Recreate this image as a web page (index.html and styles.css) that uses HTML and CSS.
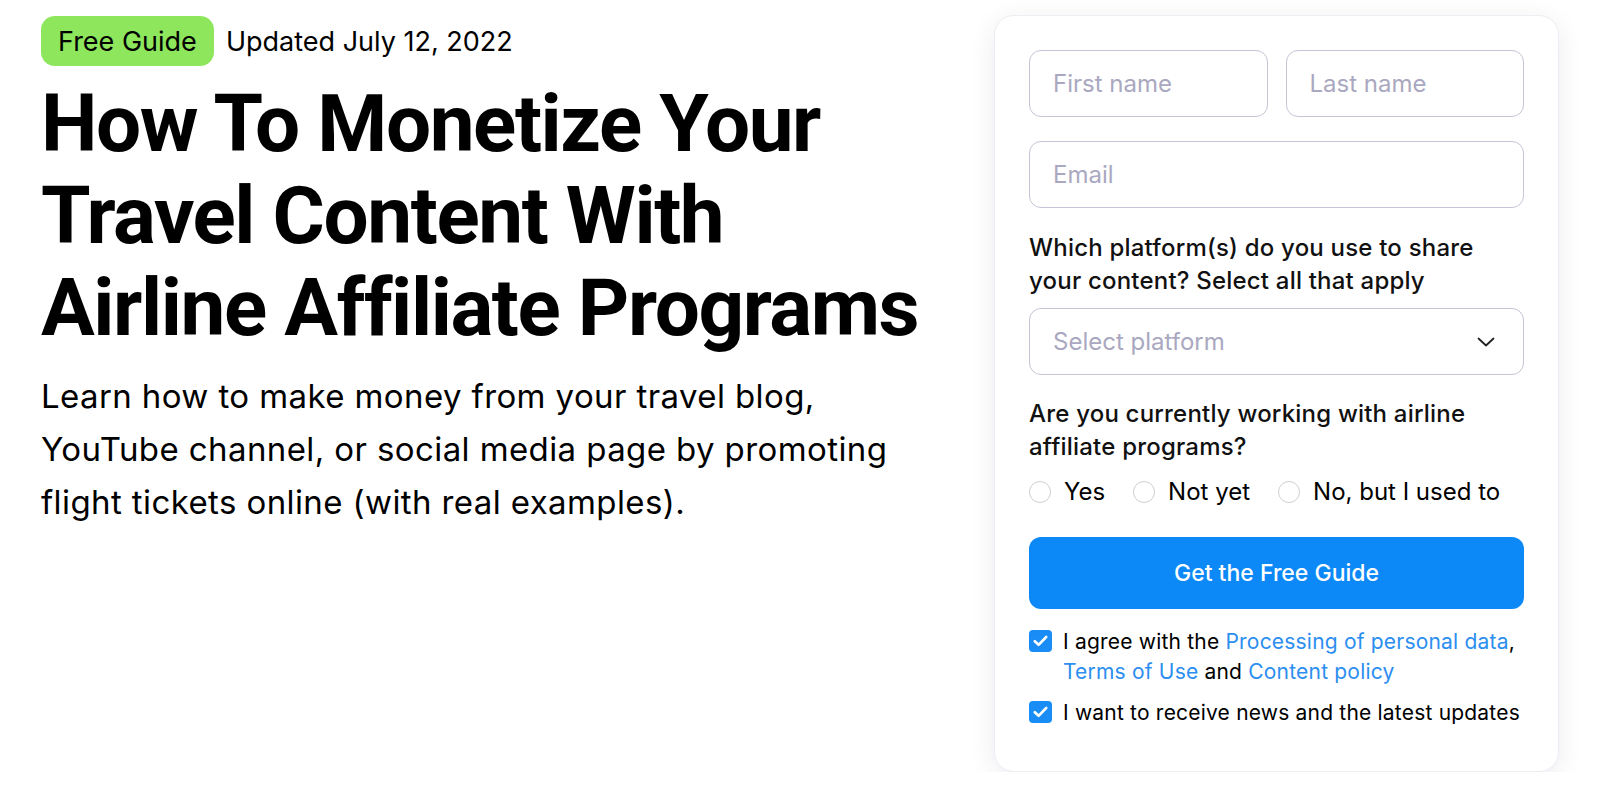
FILE: index.html
```html
<!DOCTYPE html>
<html lang="en">
<head>
    <meta charset="UTF-8">
    <meta name="viewport" content="width=device-width, initial-scale=1.0">
    <title>Airline Affiliate Programs Guide</title>
    <link rel="stylesheet" href="styles.css">
</head>
<body>
    <div class="page">
        <section class="intro">
            <div class="meta">
                <span class="badge">Free Guide</span>
                <span class="updated">Updated July 12, 2022</span>
            </div>
            <h1>How To Monetize Your<br>Travel Content With<br>Airline Affiliate Programs</h1>
            <p class="lead">Learn how to make money from your travel blog,<br>YouTube channel, or social media page by promoting<br>flight tickets online (with real examples).</p>
        </section>

        <form class="card" onsubmit="return false">
            <div class="name-row">
                <input type="text" name="first_name" placeholder="First name">
                <input type="text" name="last_name" placeholder="Last name">
            </div>
            <input type="email" name="email" class="email" placeholder="Email">

            <p class="question">Which platform(s) do you use to share your content? Select all that apply</p>
            <div class="select">
                <span>Select platform</span>
                <svg width="18" height="10" viewBox="0 0 18 10"><path d="M1.5 1.5 9 8.5l7.5-7" fill="none" stroke="#222" stroke-width="1.8" stroke-linecap="round" stroke-linejoin="round"/></svg>
            </div>

            <p class="question second">Are you currently working with airline affiliate programs?</p>
            <div class="radios">
                <label class="radio"><input type="radio" name="working"><span>Yes</span></label>
                <label class="radio"><input type="radio" name="working"><span>Not yet</span></label>
                <label class="radio"><input type="radio" name="working"><span>No, but I used to</span></label>
            </div>

            <button type="submit">Get the Free Guide</button>

            <div class="consent">
                <span class="check"><svg width="15" height="12" viewBox="0 0 15 12"><path d="M1.8 6.2 5.6 9.8 13.2 2" fill="none" stroke="#fff" stroke-width="2.6" stroke-linecap="round" stroke-linejoin="round"/></svg></span>
                <p>I agree with the <a href="#">Processing of personal data</a>,<br><a href="#">Terms of Use</a> and <a href="#">Content policy</a></p>
            </div>
            <div class="consent last">
                <span class="check"><svg width="15" height="12" viewBox="0 0 15 12"><path d="M1.8 6.2 5.6 9.8 13.2 2" fill="none" stroke="#fff" stroke-width="2.6" stroke-linecap="round" stroke-linejoin="round"/></svg></span>
                <p>I want to receive news and the latest updates</p>
            </div>
        </form>
    </div>
</body>
</html>
```

FILE: styles.css
```css
body {
    margin: 0;
    background-color: #fff;
    font-family: 'Inter', 'Noto Sans', sans-serif;
    color: #000;
}
.page {
    display: flex;
    justify-content: space-between;
    align-items: flex-start;
    padding: 15px 41px 0 41px;
}
.intro {
    padding-top: 1px;
}
.meta {
    display: flex;
    align-items: center;
    gap: 12px;
}
.badge {
    background-color: #8ee65c;
    border-radius: 14px;
    height: 50px;
    padding: 0 17px;
    display: flex;
    align-items: center;
    font-size: 27px;
}
.updated {
    font-size: 27px;
}
h1 {
    font-family: 'Roboto', sans-serif;
    font-weight: 700;
    font-size: 80px;
    line-height: 92px;
    letter-spacing: -1.4px;
    margin: 12px 0 0 0;
}
.lead {
    font-size: 33px;
    line-height: 53px;
    letter-spacing: 0.4px;
    margin: 16px 0 0 0;
}

.card {
    box-sizing: border-box;
    width: 565px;
    height: 757px;
    padding: 34px 34px 0 34px;
    border: 1px solid #ededf4;
    border-radius: 20px;
    box-shadow: 0 6px 26px rgba(40, 40, 90, 0.09);
    background-color: #fff;
}
.name-row {
    display: grid;
    grid-template-columns: 1fr 1fr;
    gap: 18px;
}
input[type="text"], input[type="email"], .select {
    box-sizing: border-box;
    width: 100%;
    height: 67px;
    border: 1px solid #c6c4d6;
    border-radius: 12px;
    padding: 0 23px;
    font-family: 'Inter', sans-serif;
    font-size: 24px;
    color: #222;
    outline: none;
}
input::placeholder {
    color: #aaa8c0;
}
.email {
    margin-top: 24px;
}
.question {
    font-size: 24px;
    font-weight: 500;
    line-height: 33px;
    letter-spacing: 0.2px;
    margin: 23px 0 0 0;
    color: #111;
}
.question.second {
    margin-top: 22px;
}
.select {
    display: flex;
    align-items: center;
    justify-content: space-between;
    margin-top: 11px;
    padding-right: 28px;
    color: #aaa8c0;
}
.radios {
    display: flex;
    gap: 28px;
    margin-top: 12px;
    height: 33px;
    align-items: center;
}
.radio {
    display: flex;
    align-items: center;
    gap: 13px;
    font-size: 24px;
}
.radio input {
    appearance: none;
    margin: 0;
    width: 22px;
    height: 22px;
    border: 1px solid #cfcfd6;
    border-radius: 50%;
}
button {
    display: block;
    width: 100%;
    height: 72px;
    margin-top: 29px;
    border: none;
    border-radius: 12px;
    background-color: #0d88f7;
    color: #fff;
    font-family: 'Inter', sans-serif;
    font-size: 23px;
    font-weight: 500;
    cursor: pointer;
}
.consent {
    display: flex;
    gap: 11px;
    margin-top: 18px;
    align-items: flex-start;
}
.consent.last {
    margin-top: 11px;
}
.check {
    flex: none;
    width: 23px;
    height: 22px;
    margin-top: 3px;
    border-radius: 4px;
    background-color: #1a8cf5;
    display: flex;
    align-items: center;
    justify-content: center;
}
.consent p {
    margin: 0;
    font-size: 21px;
    line-height: 30px;
    letter-spacing: 0.2px;
}
.consent a {
    color: #2b8ef0;
    text-decoration: none;
}
```
